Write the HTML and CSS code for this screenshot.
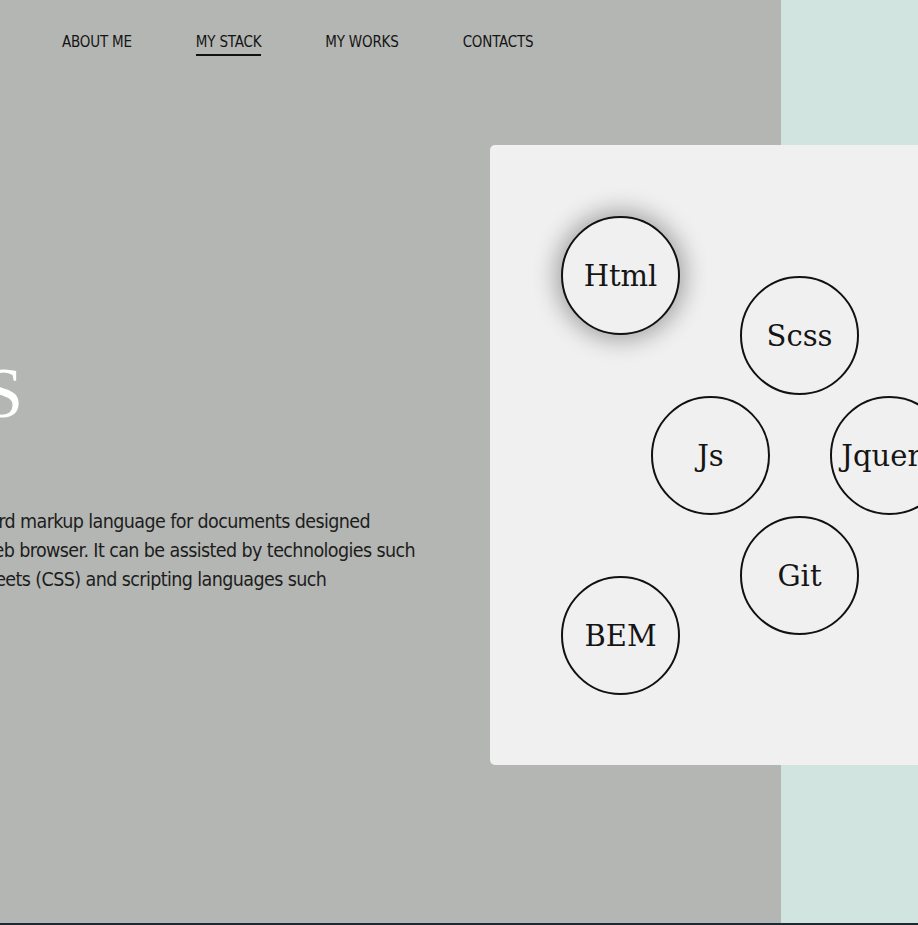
FILE: index.html
```html
<!DOCTYPE html>
<html lang="en">
<head>
<meta charset="utf-8">
<title>My stack</title>
<link rel="stylesheet" href="styles.css">
</head>
<body>
<div class="page">
  <header class="nav">
    <a class="nav-link" href="#">ABOUT ME</a>
    <a class="nav-link active" href="#">MY STACK</a>
    <a class="nav-link" href="#">MY WORKS</a>
    <a class="nav-link" href="#">CONTACTS</a>
  </header>
  <main class="hero">
    <section class="intro">
      <div class="intro-title"><h1>HTML &amp; CSS</h1></div>
      <p class="intro-text">
        <span class="line line-first">HTML is the standard markup language for documents designed</span>
        <span class="line">to be displayed in a web browser. It can be assisted by technologies such</span>
        <span class="line">as Cascading Style Sheets (CSS) and scripting languages such</span>
      </p>
    </section>
    <section class="card">
      <div class="bubble active b-html">Html</div>
      <div class="bubble b-scss">Scss</div>
      <div class="bubble b-js">Js</div>
      <div class="bubble b-jquery">Jquery</div>
      <div class="bubble b-git">Git</div>
      <div class="bubble b-bem">BEM</div>
    </section>
  </main>
</div>
<footer class="footer"></footer>
</body>
</html>
```
FILE: styles.css
```css
* { box-sizing: border-box; }
html, body { margin: 0; padding: 0; }
body {
  width: 918px;
  height: 925px;
  overflow: hidden;
  background: #1c2a31;
  font-family: "DejaVu Sans Condensed", "DejaVu Sans", sans-serif;
}
.page {
  height: 923px;
  background: linear-gradient(to right, #b4b6b3 781px, #d2e4df 781px);
  overflow: hidden;
}
.nav {
  display: flex;
  gap: 64px;
  padding: 31px 0 0 62px;
  height: 60px;
}
.nav-link {
  color: #141414;
  text-decoration: none;
  font-size: 15px;
  letter-spacing: -0.2px;
  line-height: 22px;
  padding-bottom: 1px;
  border-bottom: 2px solid transparent;
  height: 25px;
}
.nav-link.active { border-bottom-color: #111; }
.hero {
  display: flex;
  align-items: flex-start;
  margin-top: 85px;
}
.intro {
  flex: none;
  width: 560px;
  margin-left: -186px;
  padding-top: 212px;
}
.intro-title {
  display: flex;
  justify-content: flex-end;
  width: 209px;
  height: 72px;
}
.intro-title h1 {
  margin: 0;
  white-space: nowrap;
  font-family: "Liberation Serif", serif;
  font-weight: normal;
  font-size: 72px;
  line-height: 72px;
  color: #ffffff;
}
.intro-text {
  margin: 78px 0 0;
  font-size: 19.5px;
  letter-spacing: -0.6px;
  line-height: 29px;
  color: #1d1d1d;
}
.line { display: block; white-space: nowrap; }
.line-first { text-indent: 27px; }
.card {
  flex: none;
  position: relative;
  width: 620px;
  height: 620px;
  margin-left: 116px;
  background: #f0f0f0;
  border-radius: 5px;
}
.bubble {
  position: absolute;
  width: 119px;
  height: 119px;
  margin: -59px 0 0 -59px;
  border: 2px solid #111;
  border-radius: 50%;
  background: #f0f0f0;
  display: flex;
  align-items: center;
  justify-content: center;
  font-family: "DejaVu Serif", serif;
  font-size: 29px;
  color: #151515;
}
.bubble.active { box-shadow: 0 0 22px 6px rgba(0, 0, 0, 0.3); }
.b-html { left: 130px; top: 130px; }
.b-scss { left: 309px; top: 190px; }
.b-js { left: 220px; top: 310px; }
.b-jquery { left: 399px; top: 310px; }
.b-git { left: 309px; top: 430px; }
.b-bem { left: 130px; top: 490px; }
.footer { height: 2px; }
```
